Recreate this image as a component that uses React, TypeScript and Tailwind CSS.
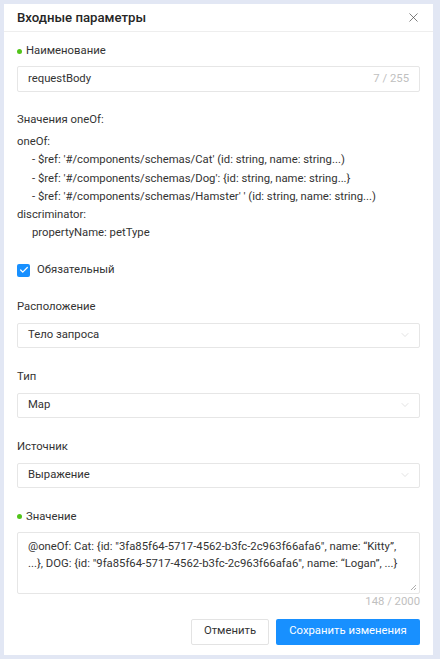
import { Check, ChevronDown, X } from "lucide-react";

function Label({ children, required }: { children: React.ReactNode; required?: boolean }) {
  return (
    <div className="flex items-center h-4 text-[11.3px] leading-4 text-[#333]">
      {required && <span className="w-[5px] h-[5px] rounded-full bg-[#52c41a] mr-[4px]" />}
      {children}
    </div>
  );
}

function Select({ value }: { value: string }) {
  return (
    <div className="mt-2 h-[25px] flex items-center justify-between border border-[#e6e6e6] rounded-[2px] pl-[10px] pr-[8px] text-[11.3px] text-[#333]">
      <span>{value}</span>
      <ChevronDown size={12} strokeWidth={1} className="text-[#c4c4c4]" />
    </div>
  );
}

export default function App() {
  return (
    <div className="w-[440px] h-[659px] bg-[#e2e7f4] p-[4px] pr-[7px] font-['Roboto',sans-serif]">
      <div className="bg-white h-[651px] flex flex-col">
        <div className="h-[28px] flex items-center justify-between border-b border-[#eeeeee] pl-[13px] pr-[12px]">
          <span className="text-[13.2px] font-medium text-[#262626]">Входные параметры</span>
          <X size={15} strokeWidth={1.1} className="text-[#444]" />
        </div>
        <div className="px-[13px] flex flex-col">
          <div className="mt-[11px]">
            <Label required>Наименование</Label>
          </div>
          <div className="mt-[7px] h-[26px] flex items-center justify-between border border-[#e6e6e6] rounded-[2px] px-[10px] text-[11.3px]">
            <span className="text-[#333]">requestBody</span>
            <span className="text-[#c0c0c0]">7 / 255</span>
          </div>

          <div className="mt-[20px]">
            <Label>Значения oneOf:</Label>
          </div>
          <div className="mt-[5px] text-[11.3px] leading-[18.3px] text-[#333]">
            <div>oneOf:</div>
            <div className="pl-[15px]">- $ref: '#/components/schemas/Cat' (id: string, name: string...)</div>
            <div className="pl-[15px]">- $ref: '#/components/schemas/Dog': {"{"}id: string, name: string...{"}"}</div>
            <div className="pl-[15px]">- $ref: '#/components/schemas/Hamster' ' (id: string, name: string...)</div>
            <div>discriminator:</div>
            <div className="pl-[15px]">propertyName: petType</div>
          </div>

          <div className="mt-[21px] flex items-center h-[13px]">
            <span className="w-[13px] h-[13px] rounded-[2px] bg-[#1890ff] flex items-center justify-center">
              <Check size={10} strokeWidth={3} className="text-white" />
            </span>
            <span className="ml-[7px] text-[11.3px] text-[#333]">Обязательный</span>
          </div>

          <div className="mt-[22px]">
            <Label>Расположение</Label>
          </div>
          <Select value="Тело запроса" />

          <div className="mt-[21px]">
            <Label>Тип</Label>
          </div>
          <Select value="Map" />

          <div className="mt-[21px]">
            <Label>Источник</Label>
          </div>
          <Select value="Выражение" />

          <div className="mt-[21px]">
            <Label required>Значение</Label>
          </div>
          <div className="relative mt-[7px] h-[62px] border border-[#e6e6e6] rounded-[2px] px-[10px] pt-[5px] text-[11.3px] leading-[17.5px] text-[#333]">
            <div className="whitespace-nowrap">@oneOf: Cat: {"{"}id: "3fa85f64-5717-4562-b3fc-2c963f66afa6", name: “Kitty”,</div>
            <div className="whitespace-nowrap">...{"}"}, DOG: {"{"}id: "9fa85f64-5717-4562-b3fc-2c963f66afa6", name: “Logan”, ...{"}"}</div>
            <svg className="absolute right-[2px] bottom-[2px]" width="7" height="7" viewBox="0 0 7 7">
              <path d="M1 6 L6 1 M4 6 L6 4" stroke="#999" strokeWidth="0.8" />
            </svg>
          </div>
          <div className="text-right text-[11.3px] leading-4 text-[#c0c0c0]">148 / 2000</div>

          <div className="mt-[9px] flex justify-end gap-[7px]">
            <button className="h-[26px] w-[78px] border border-[#e3e3e3] rounded-[2px] text-[11.3px] text-[#333] bg-white">
              Отменить
            </button>
            <button className="h-[26px] w-[144px] rounded-[2px] text-[11.3px] text-white bg-[#1890ff]">
              Сохранить изменения
            </button>
          </div>
        </div>
      </div>
    </div>
  );
}
